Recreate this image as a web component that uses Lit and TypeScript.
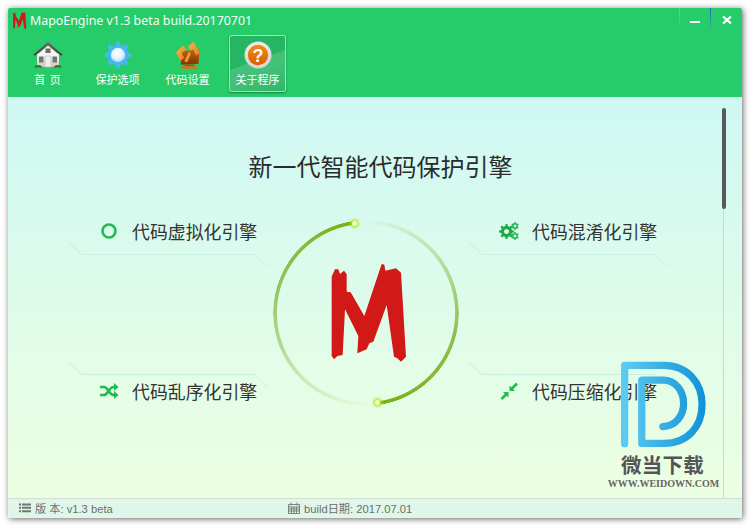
import { LitElement, html, css, svg } from "lit";
import { customElement } from "lit/decorators.js";

const M_POINTS =
  "35,50 45,28 55,28 60,42 72,32 80,42 80,95 92,97 133,168 185,12 193,14 196,32 215,28 228,25 243,38 258,290 243,305 232,295 222,290 200,135 160,245 148,250 140,268 112,280 115,228 75,148 68,285 52,288 42,298 35,288";

function gearPath(cx: number, cy: number, rOut: number, rIn: number, teeth: number) {
  const pts: string[] = [];
  const step = (Math.PI * 2) / teeth;
  for (let i = 0; i < teeth; i++) {
    const a = i * step - Math.PI / 2;
    const w = step * 0.2;
    const seq: [number, number][] = [
      [a - w * 1.35, rIn],
      [a - w * 0.8, rOut],
      [a + w * 0.8, rOut],
      [a + w * 1.35, rIn],
    ];
    for (const [t, r] of seq) {
      pts.push(`${(cx + Math.cos(t) * r).toFixed(2)} ${(cy + Math.sin(t) * r).toFixed(2)}`);
    }
  }
  return "M" + pts.join("L") + "Z";
}

const mLogo = (cls: string) => html`<svg class=${cls} viewBox="0 0 270 330" preserveAspectRatio="none"><polygon points=${M_POINTS} fill="#d11a17"></polygon></svg>`;

const houseIcon = html`<svg width="32" height="28" viewBox="0 0 32 28">
  <defs>
    <linearGradient id="wall" x1="0" y1="0" x2="0" y2="1"><stop offset="0" stop-color="#ffffff"/><stop offset="1" stop-color="#c9c9c4"/></linearGradient>
    <linearGradient id="roof" x1="0" y1="0" x2="0" y2="1"><stop offset="0" stop-color="#6e6a62"/><stop offset="1" stop-color="#45423c"/></linearGradient>
  </defs>
  <rect x="5" y="12" width="22" height="14" fill="url(#wall)"/>
  <path d="M16 1 L31 14 L28.500 14.500 L16 4.500 L3.500 14.500 L1 14 Z" fill="url(#roof)"/>
  <path d="M16 4.500 L26 13 L26 15 L6 15 L6 13 Z" fill="#f5f5f2"/>
  <rect x="13.500" y="7.500" width="5" height="4.500" fill="#6b6b66"/>
  <rect x="7" y="15.500" width="4.500" height="6" fill="#74756f"/>
  <rect x="20.500" y="15.500" width="4.500" height="6" fill="#74756f"/>
  <rect x="13" y="15" width="6" height="11" fill="#eeeeea" stroke="#b8b8b2" stroke-width=".6"/>
  <path d="M2 26.500 Q3 23.500 6 24 Q9 23.500 11 26.500 Z M21 26.500 Q23 23.500 26 24 Q29 23.500 30 26.500 Z" fill="#4a6a2c"/>
</svg>`;

const gearIcon = html`<svg width="28" height="28" viewBox="0 0 28 28">
  <defs>
    <radialGradient id="gc" cx=".45" cy=".4" r=".6"><stop offset="0" stop-color="#ffffff"/><stop offset=".6" stop-color="#e2f4ff"/><stop offset="1" stop-color="#9fd8fb"/></radialGradient>
  </defs>
  <path d=${gearPath(14, 14, 13.5, 10.5, 8)} fill="#47b6f2"/>
  <circle cx="14" cy="14" r="7.200" fill="url(#gc)"/>
</svg>`;

const codeIcon = html`<svg width="24" height="28" viewBox="45 15 72 85">
  <defs>
    <linearGradient id="scr" x1="0" y1="0" x2="0" y2="1"><stop offset="0" stop-color="#c9600f"/><stop offset="1" stop-color="#7a3604"/></linearGradient>
    <linearGradient id="chev" x1="0" y1="0" x2="1" y2="1"><stop offset="0" stop-color="#fbb04a"/><stop offset="1" stop-color="#ee7f1a"/></linearGradient>
  </defs>
  <path d="M56 46 L115 42 L113 84 L60 87 Z" fill="url(#scr)"/>
  <path d="M74 86 H98 L102 92 H70 Z" fill="#a54a07"/>
  <path d="M62 92 H108 V99 H62 Z" fill="#e8690f"/>
  <path d="M45 50 L66 28 L76 40 L62 52 L69 66 L58 76 Z" fill="url(#chev)"/>
  <path d="M82 30 L98 17 L116 50 L106 60 L96 38 L88 45 Z" fill="url(#chev)"/>
  <path d="M70 76 L84 48 L90 52 L78 80 Z" fill="#f09a3a"/>
</svg>`;

const aboutIcon = html`<svg width="28" height="28" viewBox="0 0 28 28">
  <defs>
    <radialGradient id="rim" cx=".5" cy=".35" r=".7"><stop offset="0" stop-color="#ffffff"/><stop offset="1" stop-color="#cfcfcb"/></radialGradient>
    <linearGradient id="ora" x1="0" y1="0" x2="0" y2="1"><stop offset="0" stop-color="#f58a12"/><stop offset="1" stop-color="#d95e04"/></linearGradient>
  </defs>
  <circle cx="14" cy="14" r="13.500" fill="url(#rim)"/>
  <circle cx="14" cy="14" r="10.200" fill="url(#ora)"/>
  <text x="14" y="20.500" text-anchor="middle" class="qmark">?</text>
</svg>`;

const circleIcon = svg`<circle cx="10" cy="10" r="6.500" fill="none" stroke="#22b950" stroke-width="2.600"/>`;
const cogsIcon = svg`
  <path fill-rule="evenodd" d="${gearPath(7.5, 10.5, 7.5, 5.6, 8)} M7.500 8 a2.500 2.500 0 1 0 .01 0Z" fill="#1fa74a"/>
  <path fill-rule="evenodd" d="${gearPath(16, 5, 4, 3, 6)} M16 3.600 a1.400 1.400 0 1 0 .01 0Z" fill="#22b950"/>
  <path fill-rule="evenodd" d="${gearPath(16, 15, 4, 3, 6)} M16 13.600 a1.400 1.400 0 1 0 .01 0Z" fill="#22b950"/>`;
const shuffleIcon = svg`
  <path d="M1 6 H5 C9 6 10 14 14.500 14 H16" fill="none" stroke="#22b950" stroke-width="2.600"/>
  <path d="M1 14 H5 C9 14 10 6 14.500 6 H16" fill="none" stroke="#22b950" stroke-width="2.600"/>
  <path d="M15 2 L19.500 6 L15 10 Z M15 10 L19.500 14 L15 18 Z" fill="#22b950"/>`;
const compressIcon = svg`
  <path d="M18 2.500 L13 7.500" stroke="#22b950" stroke-width="2.600" fill="none"/>
  <path d="M10.500 10 L10.500 4.500 L16 10 Z" fill="#22b950"/>
  <path d="M2.500 18 L7 13.500" stroke="#22b950" stroke-width="2.600" fill="none"/>
  <path d="M9.500 11 L9.500 16.500 L4 11 Z" fill="#22b950"/>`;

const FEATURES = [
  { label: "代码虚拟化引擎", icon: circleIcon, lineFirst: false },
  { label: "代码混淆化引擎", icon: cogsIcon, lineFirst: false },
  { label: "代码乱序化引擎", icon: shuffleIcon, lineFirst: true },
  { label: "代码压缩化引擎", icon: compressIcon, lineFirst: true },
];

const TABS = [
  { label: "首 页", icon: houseIcon, active: false },
  { label: "保护选项", icon: gearIcon, active: false },
  { label: "代码设置", icon: codeIcon, active: false },
  { label: "关于程序", icon: aboutIcon, active: true },
];

@customElement("app-root")
export class AppRoot extends LitElement {
  static styles = css`
    :host { display: block; width: 751px; height: 526px; box-sizing: border-box; padding: 8px 9px 8px 8px; background: #fff; font-family: "Noto Sans CJK SC", "Noto Sans", sans-serif; overflow: hidden; }
    .window { height: 100%; display: flex; flex-direction: column; border-radius: 2px; box-shadow: 1px 1px 6px rgba(0,0,0,.6); overflow: hidden; }
    .header { height: 89px; background: #25cc69; color: #fff; flex: none; display: flex; flex-direction: column; }
    .titlebar { height: 27px; display: flex; align-items: flex-start; flex: none; }
    .small-logo { width: 16px; height: 19.500px; margin: 3px 0 0 3px; flex: none; }
    .app-title { font-family: "Noto Sans", sans-serif; font-size: 12.400px; line-height: 26px; margin-left: 3px; color: #f2fff7; }
    .controls { margin-left: auto; display: flex; }
    .ctrl { width: 30px; height: 22px; display: flex; align-items: center; justify-content: center; border-left: 1px solid; }
    .ctrl.min { border-image: linear-gradient(to bottom, rgba(255,255,255,.22), rgba(255,255,255,0)) 1; }
    .ctrl.close { width: 31px; border-image: linear-gradient(to bottom, #1e62d8, rgba(30,98,216,0)) 1; }
    .bar { width: 10px; height: 2px; background: #fff; margin-top: 6px; }
    .x { margin-top: 2px; }
    .nav { display: flex; gap: 13px; padding-left: 11px; }
    .tab { width: 57px; height: 57px; box-sizing: border-box; display: flex; flex-direction: column; align-items: center; border-radius: 3px; border: 1px solid transparent; padding-top: 5px; }
    .tab .ico { height: 28px; display: flex; align-items: center; justify-content: center; }
    .tab .lbl { font-size: 11px; line-height: 16px; margin-top: 2px; white-space: nowrap; word-spacing: 2px; }
    .tab.active { border-color: rgba(255,255,255,.55); background: linear-gradient(160deg, rgba(255,255,255,0) 0 45%, rgba(255,255,255,.14) 46% 62%, rgba(255,255,255,.03) 100%), #26b663; box-shadow: 0 1px 2px rgba(0,0,0,.35); }
    .qmark { font-family: "Liberation Sans", sans-serif; font-weight: 700; font-size: 18px; fill: #fff; }
    .main { flex: 1; position: relative; background: linear-gradient(to bottom, #cff8f4, #ecffe1); padding-top: 53px; overflow: hidden; }
    .headline { font-size: 24px; line-height: 32px; color: #2b2b2b; text-align: center; font-weight: 400; margin: 0; padding-left: 11px; }
    .features { display: grid; grid-template-columns: 200px 200px; grid-template-rows: 46px 40px; column-gap: 200px; row-gap: 94px; margin: 39px 0 0 60px; }
    .feature { display: flex; flex-direction: column; position: relative; }
    .feature-row { display: flex; align-items: center; gap: 13px; padding-left: 31px; height: 20px; flex: none; }
    .feature-row svg { flex: none; }
    .feature-row span { font-size: 17.900px; line-height: 20px; color: #333; white-space: nowrap; }
    .deco { flex: none; width: 200px; height: 26px; display: block; }
    .feature.line-first .deco { margin-bottom: -6px; }
    .ring { position: absolute; left: 265px; top: 123px; width: 186px; height: 186px; }
    .ring-arc { position: absolute; inset: 0; border-radius: 50%;
      background: conic-gradient(rgba(122,182,30,0) 0deg, rgba(134,190,70,.35) 45deg, #8fc154 100deg, #74b010 173deg, rgba(122,182,30,0) 173.200deg, rgba(122,182,30,0) 178deg, rgba(134,190,70,.3) 225deg, #9cc96b 275deg, #74b010 352deg, rgba(122,182,30,0) 352.200deg);
      -webkit-mask: radial-gradient(circle, transparent 0 88.600px, #000 89.600px 92.400px, transparent 93.400px);
      mask: radial-gradient(circle, transparent 0 88.600px, #000 89.600px 92.400px, transparent 93.400px); }
    .dot { position: absolute; width: 5px; height: 5px; border-radius: 50%; background: #f6ffb8; box-shadow: 0 0 3px 1.500px #a9e41c; }
    .dot.a { left: 78.500px; top: 0.500px; }
    .dot.b { left: 101.500px; top: 179.500px; }
    .big-m { position: absolute; left: 47px; top: 40px; width: 90px; height: 110px; }
    .scroll-track { position: absolute; top: 11px; bottom: 0; left: 715px; width: 1px; background: rgba(185,215,195,.8); }
    .scroll-thumb { position: absolute; top: 11px; left: 714px; width: 4px; height: 101px; border-radius: 2px; background: #565b59; }
    .watermark { position: absolute; left: 597px; top: 264px; width: 112px; display: flex; flex-direction: column; align-items: center; }
    .wm-d { width: 87px; height: 87px; display: block; margin-left: 4px; }
    .wm-cn { font-size: 20.500px; font-weight: 700; line-height: 26px; color: #555; margin-top: 3px; margin-left: 3px; white-space: nowrap; letter-spacing: .3px; }
    .wm-en { font-family: "Liberation Serif", serif; font-weight: 700; font-size: 10px; line-height: 12px; color: #666; white-space: nowrap; margin: 1px 0 0 5px; }
    .footer { height: 20px; flex: none; box-sizing: border-box; background: #dff6e9; border-top: 1px solid #d3dcd6; display: flex; align-items: center; padding: 0 0 2px 11px; color: #6a6f6c; font-size: 11.200px; }
    .foot-item { display: flex; align-items: center; gap: 4px; white-space: nowrap; font-family: "Liberation Sans", "Noto Sans CJK SC", sans-serif; }
    .foot-item.first { width: 269px; }
  `;

  render() {
    return html`<div class="window">
      <div class="header">
        <div class="titlebar">
          ${mLogo("small-logo")}
          <div class="app-title">MapoEngine v1.3 beta build.20170701</div>
          <div class="controls">
            <div class="ctrl min"><div class="bar"></div></div>
            <div class="ctrl close"><svg class="x" width="10" height="8" viewBox="0 0 10 8"><path d="M1 .5 L9 7.500 M9 .5 L1 7.500" stroke="#fff" stroke-width="2.200" fill="none"/></svg></div>
          </div>
        </div>
        <div class="nav">
          ${TABS.map(
            (t) => html`<div class="tab ${t.active ? "active" : ""}">
              <div class="ico">${t.icon}</div>
              <div class="lbl">${t.label}</div>
            </div>`
          )}
        </div>
      </div>
      <div class="main">
        <h1 class="headline">新一代智能代码保护引擎</h1>
        <div class="features">
          ${FEATURES.map((f) => {
            const row = html`<div class="feature-row"><svg width="20" height="20" viewBox="0 0 20 20">${f.icon}</svg><span>${f.label}</span></div>`;
            const deco = html`<svg class="deco" viewBox="0 0 200 26"><polyline points="0.5,0.5 14,13.5 187,13.5 199.5,25.5" fill="none" stroke="#c6efe6" stroke-width="1"/></svg>`;
            return html`<div class="feature ${f.lineFirst ? "line-first" : ""}">${f.lineFirst ? html`${deco}${row}` : html`${row}${deco}`}</div>`;
          })}
        </div>
        <div class="ring">
          <div class="ring-arc"></div>
          <div class="dot a"></div>
          <div class="dot b"></div>
          ${mLogo("big-m")}
        </div>
        <div class="scroll-track"></div>
        <div class="scroll-thumb"></div>
        <div class="watermark">
          <svg class="wm-d" viewBox="448 33 258 264">
            <defs><linearGradient id="wmg" x1="0" y1="0" x2="1" y2="0"><stop offset="0" stop-color="#5ccaf2"/><stop offset="1" stop-color="#1394d8"/></linearGradient></defs>
            <path d="M459 284 V46 H578 C650 46 694 100 694 165 C694 232 650 283 578 283 H511 V91 H575 C615 91 638 125 638 162 C638 200 612 232 575 232" fill="none" stroke="url(#wmg)" stroke-width="22" stroke-linecap="round" stroke-linejoin="round"/>
          </svg>
          <div class="wm-cn">微当下载</div>
          <div class="wm-en">WWW.WEIDOWN.COM</div>
        </div>
      </div>
      <div class="footer">
        <div class="foot-item first">
          <svg width="12" height="10" viewBox="0 0 12 10"><path d="M0 .5h2v2H0zM3 .5h9v2H3zM0 3.800h2v2H0zM3 3.800h9v2H3zM0 7.200h2v2H0zM3 7.200h9v2H3z" fill="#6f7673"/></svg>
          <span>版 本: v1.3 beta</span>
        </div>
        <div class="foot-item">
          <svg width="12" height="12" viewBox="0 0 12 12"><path d="M.5 2.500h11v9H.5zM.5 5h11M.5 7h11M.5 9h11M3.500 5v6.500M6 5v6.500M8.500 5v6.500M3 .5v3M9 .5v3" fill="none" stroke="#7b817e" stroke-width="1"/></svg>
          <span>build日期: 2017.07.01</span>
        </div>
      </div>
    </div>`;
  }
}
